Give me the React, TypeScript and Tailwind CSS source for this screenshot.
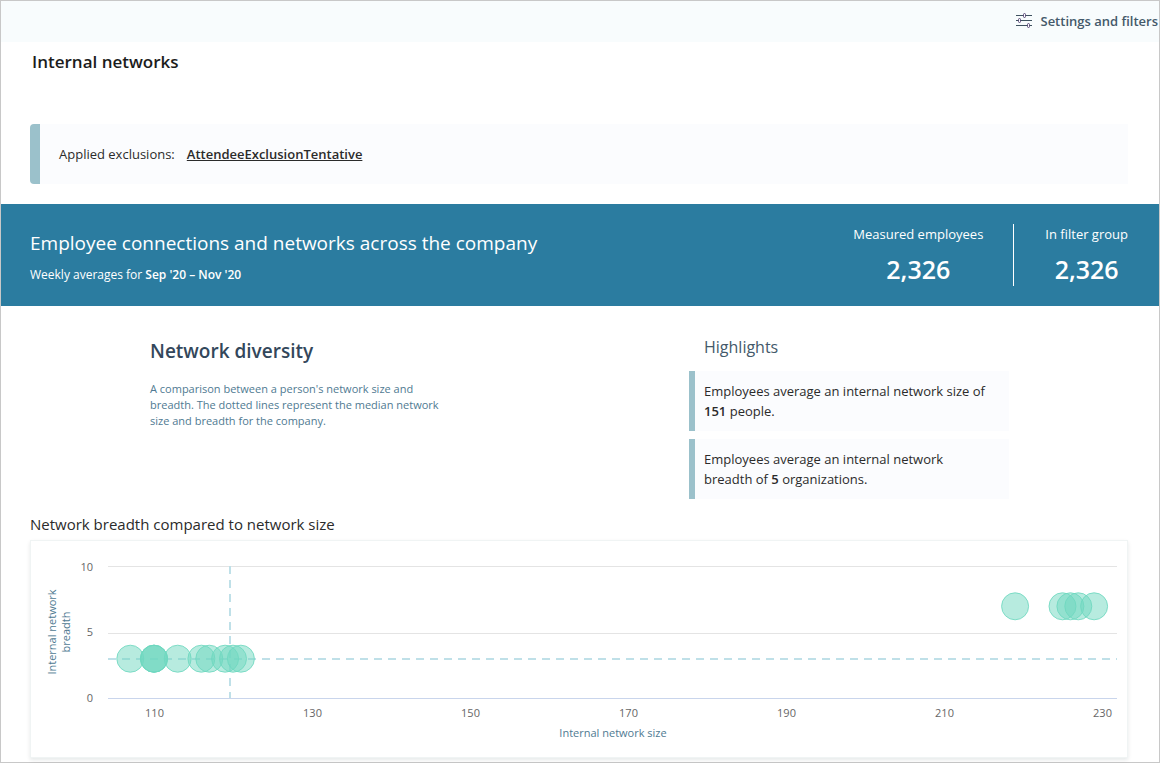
import type { ReactNode } from 'react';

const HIGH_BREADTH = 7;
const LOW_BREADTH = 3;

const points = [
  ...[107, 110, 110, 110, 113, 116, 117, 119, 120, 121].map((size) => ({ size, breadth: LOW_BREADTH })),
  ...[219, 225, 226, 227, 229].map((size) => ({ size, breadth: HIGH_BREADTH })),
];

const sizeTicks = [110, 130, 150, 170, 190, 210, 230];
const breadthTicks = [
  { value: 10, y: 25.5, labelY: 30 },
  { value: 5, y: 92.5, labelY: 95 },
  { value: 0, y: 157.5, labelY: 161 },
];

const toX = (size: number) => 123 + (size - 110) * 7.9;
const toY = (breadth: number) => 157 - breadth * 13.1;

function SlidersIcon() {
  return (
    <svg width="16" height="16" viewBox="0 0 16 16" fill="none" stroke="#3f5260" strokeWidth="1" aria-hidden="true">
      <path d="M0 2.5h7M10 2.5h6M0 7.5h2M5 7.5h11M0 12.5h11M14 12.5h2" />
      <g stroke="#5c4a78">
        <rect x="7.5" y="0.5" width="2" height="4" rx="1" />
        <rect x="2.5" y="5.5" width="2" height="4" rx="1" />
        <rect x="11.5" y="10.5" width="2" height="4" rx="1" />
      </g>
    </svg>
  );
}

function Stat({ label, value }: { label: string; value: string }) {
  return (
    <div className="flex flex-col items-center">
      <span className="text-[13px] leading-5">{label}</span>
      <span className="mt-2 text-[25px] leading-[34px] font-semibold">{value}</span>
    </div>
  );
}

function Highlight({ children }: { children: ReactNode }) {
  return (
    <li className="border-l-[6px] border-[#9bc1cb] bg-[#fbfcfe] py-[10px] pr-[18px] pl-[9px] text-[13px] leading-5 text-[#2b2b2b]">
      {children}
    </li>
  );
}

function BreadthChart() {
  return (
    <svg viewBox="0 0 1096 216" className="block w-full text-[11px]" role="img" aria-label="Network breadth compared to network size">
      {breadthTicks.map(({ value, y, labelY }) => (
        <g key={value}>
          <line x1="77" x2="1086" y1={y} y2={y} stroke={value === 0 ? '#c9d5ec' : '#e4e4e4'} />
          <text x="62" y={labelY} textAnchor="end" fill="#666666">{value}</text>
        </g>
      ))}
      <line x1="77" x2="1086" y1="118" y2="118" stroke="#bfe0e8" strokeWidth="2" strokeDasharray="8 6" />
      <line x1="199" x2="199" y1="25" y2="157" stroke="#bfe0e8" strokeWidth="2" strokeDasharray="8 6" />
      {points.map(({ size, breadth }, i) => (
        <circle
          key={i}
          cx={toX(size)}
          cy={toY(breadth)}
          r="13.5"
          fill="#6fd8bf"
          fillOpacity="0.5"
          stroke="#6fd8bf"
          strokeOpacity="0.85"
        />
      ))}
      {sizeTicks.map((tick) => (
        <text key={tick} x={toX(tick) + 0.5} y="176" textAnchor="middle" fill="#666666">{tick}</text>
      ))}
      <text x="582" y="196" textAnchor="middle" fill="#4f7a92">Internal network size</text>
      <g transform="rotate(-90)" textAnchor="middle" fill="#4f7a92">
        <text x="-91" y="25">Internal network</text>
        <text x="-91" y="39">breadth</text>
      </g>
    </svg>
  );
}

export default function App() {
  return (
    <div className="min-h-screen border border-[#c8c8c8] bg-white font-['Open_Sans','Noto_Sans',sans-serif] text-[#2b2b2b]">
      <header className="flex h-[41px] items-center justify-end bg-[#f8fcfd] pr-px pb-0.5">
        <button type="button" className="flex items-center gap-2 text-[13px] leading-5 font-semibold text-[#44596a]">
          <SlidersIcon />
          Settings and filters
        </button>
      </header>

      <main>
        <h1 className="px-[31px] pt-2 text-[17px] leading-6 font-semibold text-[#1c1c1c]">Internal networks</h1>

        <div className="mt-[50px] mr-[31px] ml-[29px] flex h-[60px] items-center gap-3 rounded-l border-l-[10px] border-[#9bc1cb] bg-[#fbfcfe] pt-0.5 pl-[19px] text-[13px]">
          <span>Applied exclusions:</span>
          <a href="#exclusions" className="font-semibold underline">AttendeeExclusionTentative</a>
        </div>

        <section className="mt-5 flex h-[102px] items-center justify-between bg-[#2b7ca0] pr-[31px] pl-[29px] text-white">
          <div className="pt-1">
            <h2 className="text-[19px] leading-7">Employee connections and networks across the company</h2>
            <p className="mt-2 text-xs leading-5">
              Weekly averages for <b className="font-semibold">Sep '20 – Nov '20</b>
            </p>
          </div>
          <div className="flex">
            <div className="border-r border-white pr-[30px]">
              <Stat label="Measured employees" value="2,326" />
            </div>
            <div className="pl-[31px]">
              <Stat label="In filter group" value="2,326" />
            </div>
          </div>
        </section>

        <section className="flex pt-8 pl-[149px]">
          <div className="w-[539px]">
            <h2 className="text-[19px] leading-[26px] font-semibold text-[#33475b]">Network diversity</h2>
            <p className="mt-[17px] w-[300px] text-[11px] leading-4 text-[#4f7a92]">
              A comparison between a person's network size and breadth. The dotted lines represent the median network size and breadth for the company.
            </p>
          </div>
          <div className="w-[320px]">
            <h3 className="pl-[15px] text-base leading-[18px] text-[#44596a]">Highlights</h3>
            <ul className="mt-[15px] flex flex-col gap-2">
              <Highlight>
                Employees average an internal network size of <b className="font-semibold">151</b> people.
              </Highlight>
              <Highlight>
                Employees average an internal network breadth of <b className="font-semibold">5</b> organizations.
              </Highlight>
            </ul>
          </div>
        </section>

        <section className="pt-[15px] pr-[31px] pl-[29px]">
          <h3 className="text-[15px] leading-5">Network breadth compared to network size</h3>
          <div className="mt-[6px] border border-[#f0f4f4] shadow-[0_2px_4px_rgba(0,40,40,0.1)]">
            <BreadthChart />
          </div>
        </section>
      </main>
    </div>
  );
}
